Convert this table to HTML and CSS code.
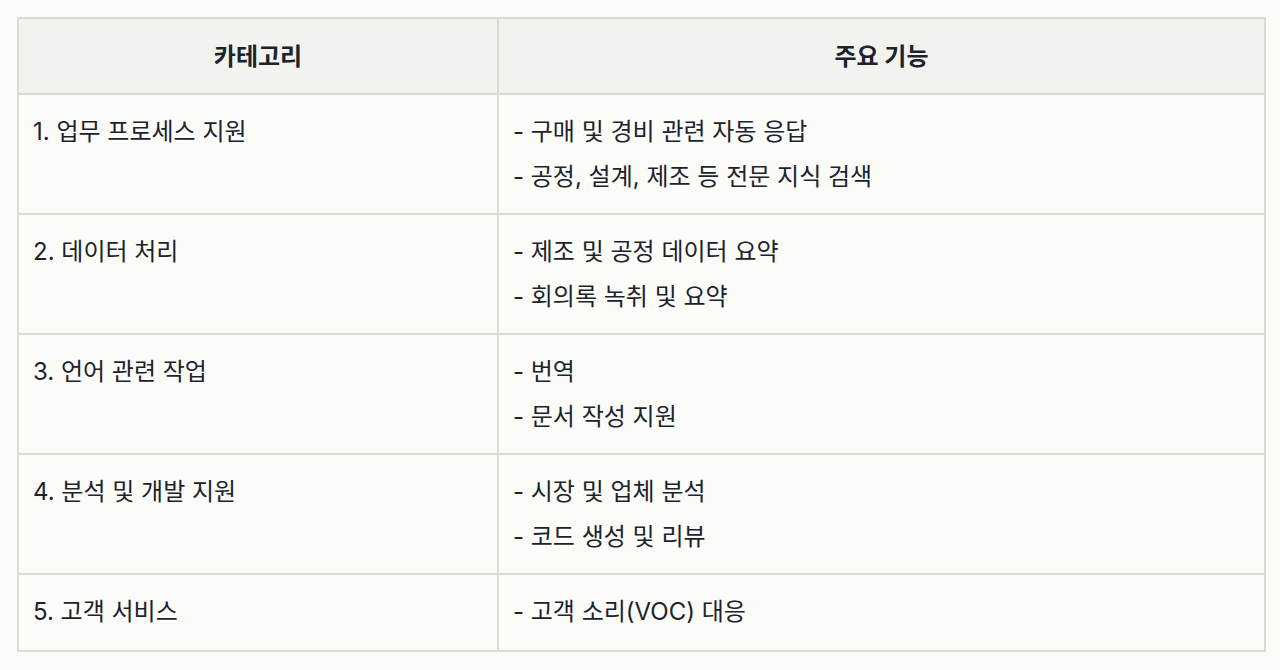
FILE: index.html
```html
<!DOCTYPE html>
<html lang="ko">
<head>
<meta charset="utf-8">
<link rel="stylesheet" href="styles.css">
</head>
<body>
<div class="wrap">
<table class="tbl">
  <thead>
    <tr><th class="c1">카테고리</th><th class="c2">주요 기능</th></tr>
  </thead>
  <tbody>
    <tr><td>1. 업무 프로세스 지원</td><td><div class="item">- 구매 및 경비 관련 자동 응답</div><div class="item">- 공정, 설계, 제조 등 전문 지식 검색</div></td></tr>
    <tr><td>2. 데이터 처리</td><td><div class="item">- 제조 및 공정 데이터 요약</div><div class="item">- 회의록 녹취 및 요약</div></td></tr>
    <tr><td>3. 언어 관련 작업</td><td><div class="item">- 번역</div><div class="item">- 문서 작성 지원</div></td></tr>
    <tr><td>4. 분석 및 개발 지원</td><td><div class="item">- 시장 및 업체 분석</div><div class="item">- 코드 생성 및 리뷰</div></td></tr>
    <tr class="last"><td>5. 고객 서비스</td><td><div class="item">- 고객 소리(VOC) 대응</div></td></tr>
  </tbody>
</table>
</div>
</body>
</html>
```
FILE: styles.css
```css
html, body {
  margin: 0;
  padding: 0;
  background: #fbfbf8;
}
.wrap {
  padding: 17px 14px 17px 17px;
}
.tbl {
  width: 100%;
  border-collapse: collapse;
  font-family: Inter, "Noto Sans CJK KR", sans-serif;
  font-size: 24px;
  color: #1a232e;
  border: 2px solid #d9d9d3;
}
.tbl th, .tbl td {
  border: 2px solid #dbdbd5;
  text-align: left;
  vertical-align: top;
  padding: 20px 14px;
  line-height: 33px;
}
.tbl th {
  background: #f2f2ee;
  text-align: center;
  font-weight: 700;
  padding-top: 21px;
  padding-bottom: 20px;
}
.tbl .last td { padding-bottom: 22px; }
.c1 { width: 450px; }
.item + .item { margin-top: 12px; }
```
